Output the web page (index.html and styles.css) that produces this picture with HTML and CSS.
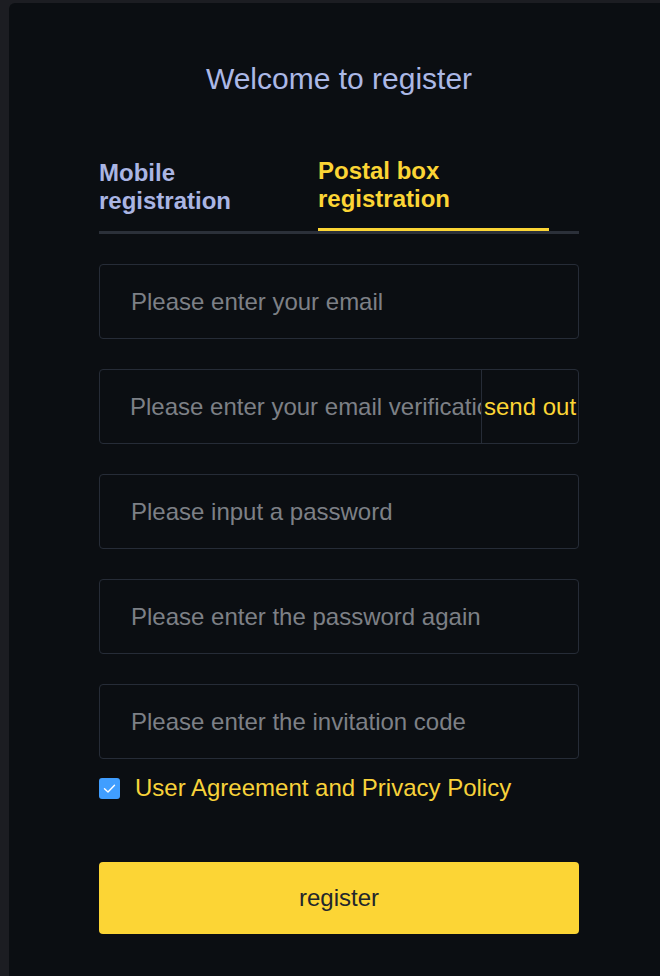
FILE: index.html
```html
<!DOCTYPE html>
<html lang="en">
<head>
<meta charset="utf-8">
<title>Welcome to register</title>
<link rel="stylesheet" href="styles.css">
</head>
<body>
<div class="page">
  <main class="card">
    <h1 class="title">Welcome to register</h1>
    <div class="tabs">
      <div class="tab tab-mobile">Mobile registration</div>
      <div class="tab tab-active">Postal box registration</div>
    </div>
    <form class="form">
      <div class="field"><input class="input" type="text" placeholder="Please enter your email"></div>
      <div class="field field-code">
        <input class="input input-code" type="text" placeholder="Please enter your email verification code">
        <button type="button" class="send">send out</button>
      </div>
      <div class="field"><input class="input" type="password" placeholder="Please input a password"></div>
      <div class="field"><input class="input" type="password" placeholder="Please enter the password again"></div>
      <div class="field"><input class="input" type="text" placeholder="Please enter the invitation code"></div>
      <label class="agree">
        <span class="checkbox">
          <svg width="21" height="21" viewBox="0 0 21 21"><path d="M5.5 10.8 L9 14 L15.5 7.2" fill="none" stroke="#fff" stroke-width="1.4" stroke-linecap="round" stroke-linejoin="round"/></svg>
        </span>
        <span class="agree-text">User Agreement and Privacy Policy</span>
      </label>
      <button type="button" class="submit">register</button>
    </form>
  </main>
</div>
</body>
</html>
```

FILE: styles.css
```css
html, body {
  margin: 0;
  padding: 0;
  background: #1c1d22;
  overflow: hidden;
}

.page {
  padding: 3px 0 0 9px;
  height: 976px;
  box-sizing: border-box;
}

.card {
  width: 660px;
  min-height: 973px;
  box-sizing: border-box;
  background: #0b0e12;
  border-radius: 6px 0 0 0;
  padding: 58px 90px 0 90px;
  font-family: "Liberation Sans", Arial, sans-serif;
}

.title {
  margin: 0;
  text-align: center;
  font-size: 30px;
  line-height: 36px;
  font-weight: 400;
  color: #abb8e6;
}

.tabs {
  margin-top: 60px;
  display: flex;
  align-items: flex-end;
  border-bottom: 3px solid #2b3039;
}

.tab {
  font-size: 24px;
  line-height: 28px;
  font-weight: 700;
  color: #aab5e3;
  padding-bottom: 16px;
}

.tab-mobile {
  width: 200px;
  margin-right: 19px;
}

.tab-active {
  width: 231px;
  color: #fcd535;
  padding-bottom: 15px;
  border-bottom: 3px solid #fcd535;
}

.form {
  margin-top: 30px;
  display: flex;
  flex-direction: column;
}

.field {
  height: 75px;
  box-sizing: border-box;
  border: 1px solid #262c37;
  border-radius: 4px;
  display: flex;
  margin-bottom: 30px;
  overflow: hidden;
}

.field:nth-child(5) {
  margin-bottom: 0;
}

.input {
  flex: 1;
  min-width: 0;
  border: 0;
  outline: none;
  background: transparent;
  padding: 0 0 0 31px;
  font-family: "Liberation Sans", Arial, sans-serif;
  font-size: 24px;
  color: #d0d3d8;
}

.input::placeholder {
  color: #7d8086;
  opacity: 1;
}

.input-code {
  padding-left: 30px;
}

.send {
  flex: 0 0 97px;
  border: 0;
  border-left: 1px solid #262c37;
  background: transparent;
  color: #fcd535;
  font-family: "Liberation Sans", Arial, sans-serif;
  font-size: 24px;
  padding: 0 0 0 2px;
  text-align: left;
  cursor: pointer;
}

.agree {
  margin-top: 15px;
  display: flex;
  align-items: center;
  height: 28px;
}

.checkbox {
  width: 21px;
  height: 21px;
  background: #409eff;
  border-radius: 3px;
  display: flex;
}

.agree-text {
  margin-left: 15px;
  font-size: 24px;
  line-height: 28px;
  color: #f8d23a;
}

.submit {
  margin-top: 60px;
  height: 72px;
  border: 0;
  border-radius: 4px;
  background: #fcd535;
  color: #23262c;
  font-family: "Liberation Sans", Arial, sans-serif;
  font-size: 24px;
  cursor: pointer;
}
```
